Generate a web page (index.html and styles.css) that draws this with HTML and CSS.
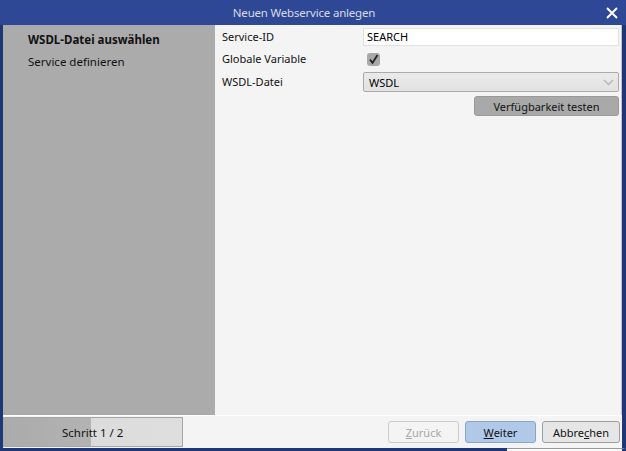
FILE: index.html
```html
<!DOCTYPE html>
<html>
<head>
<meta charset="utf-8">
<link rel="stylesheet" href="styles.css">
</head>
<body>
<div class="window">
  <div class="titlebar">
    <span class="title">Neuen Webservice anlegen</span>
    <svg class="close" width="12" height="12" viewBox="0 0 12 12"><path d="M1 1 L11 11 M11 1 L1 11" stroke="#fff" stroke-width="2" fill="none"/></svg>
  </div>
  <div class="main">
    <div class="sidebar">
      <div class="step active">WSDL-Datei auswählen</div>
      <div class="step">Service definieren</div>
    </div>
    <div class="content">
      <div class="form">
        <label class="lbl">Service-ID</label>
        <div class="input">SEARCH</div>
        <label class="lbl">Globale Variable</label>
        <div class="cbcell"><span class="checkbox"><svg width="11" height="11" viewBox="0 0 11 11"><path d="M2 5.5 L4.5 9 L9.5 1" stroke="#222" stroke-width="1.8" fill="none"/></svg></span></div>
        <label class="lbl">WSDL-Datei</label>
        <div class="select"><span>WSDL</span><svg width="11" height="7" viewBox="0 0 11 7"><path d="M1 1 L5.5 5.5 L10 1" stroke="#b4b4b4" stroke-width="1.3" fill="none"/></svg></div>
        <div class="btnrow"><button class="btn test">Verfügbarkeit testen</button></div>
      </div>
    </div>
  </div>
  <div class="footer">
    <div class="progress"><span>Schritt 1 / 2</span></div>
    <div class="buttons">
      <button class="btn disabled"><u>Z</u>urück</button>
      <button class="btn primary"><u>W</u>eiter</button>
      <button class="btn">Abbre<u>c</u>hen</button>
    </div>
  </div>
  <div class="bottom"><div class="bottom-dark"></div><div class="bottom-light"></div></div>
</div>
</body>
</html>
```
FILE: styles.css
```css
html, body {
  margin: 0;
  padding: 0;
}
body {
  width: 626px;
  height: 451px;
  overflow: hidden;
  font-family: "Noto Sans", "Open Sans", sans-serif;
  font-size: 11px;
  color: #111;
}
.window {
  width: 626px;
  height: 451px;
  display: flex;
  flex-direction: column;
  background: #1f3677;
}
.titlebar {
  height: 25px;
  flex: none;
  background: #2e4896;
  display: flex;
  align-items: center;
  justify-content: center;
  padding-right: 18px;
  position: relative;
}
.title {
  color: #d6dbe8;
  font-size: 11.5px;
  font-family: "Noto Sans", sans-serif;
  letter-spacing: -0.2px;
}
.close {
  position: absolute;
  right: 8px;
  top: 7px;
}
.main {
  flex: none;
  height: 390px;
  display: flex;
  margin: 0 4px 0 3px;
}
.sidebar {
  width: 212px;
  background: #ababab;
  padding-top: 4px;
  box-sizing: border-box;
}
.step {
  padding-left: 25px;
  height: 22px;
  line-height: 22px;
  color: #111;
  font-size: 11.5px;
}
.step.active {
  font-weight: bold;
}
.content {
  flex: 1;
  background: #f4f4f4;
  border-right: 1px solid #c4c4c4;
  padding: 3px 2px 0 7px;
}
.form {
  display: grid;
  grid-template-columns: 141px 1fr;
  grid-auto-rows: auto;
  align-items: center;
}
.lbl {
  line-height: 18px;
}
.input {
  height: 18px;
  box-sizing: border-box;
  background: #fff;
  border: 1px solid #e2e2e2;
  padding-left: 3px;
  line-height: 16px;
  color: #000;
}
.cbcell {
  height: 26px;
  display: flex;
  align-items: center;
  padding-left: 4px;
}
.checkbox {
  width: 13px;
  height: 13px;
  border-radius: 3px;
  background: #a9a9a9;
  display: flex;
  align-items: center;
  justify-content: center;
}
.select {
  height: 20px;
  box-sizing: border-box;
  border: 1px solid #aaaaaa;
  border-radius: 2px;
  background: linear-gradient(#eaeaea, #e2e2e2);
  display: flex;
  align-items: center;
  justify-content: space-between;
  padding: 0 4px 0 5px;
  color: #000;
}
.btnrow {
  grid-column: 2;
  display: flex;
  justify-content: flex-end;
  padding-top: 4px;
}
.btn {
  font-family: inherit;
  font-size: 11px;
  color: #111;
  height: 22px;
  box-sizing: border-box;
  border: 1px solid #9e9e9e;
  border-radius: 3px;
  background: #e6e6e6;
  padding: 0;
  margin: 0;
}
.btn.test {
  width: 145px;
  height: 20px;
  background: #a9a9a9;
  border-color: #9a9a9a;
}
.footer {
  flex: none;
  height: 33px;
  margin: 0 4px 0 3px;
  background: #f4f4f4;
  border-top: 1px solid #ffffff;
  box-sizing: border-box;
  display: flex;
  align-items: center;
  justify-content: space-between;
}
.progress {
  width: 180px;
  height: 30px;
  box-sizing: border-box;
  border: 1px solid #a6a6a6;
  border-left: none;
  background: linear-gradient(90deg, #ababab 0, #b3b3b3 88px, #dcdcdc 88px, #dedede 100%);
  display: flex;
  align-items: center;
  padding-left: 59px;
  font-size: 11.5px;
}
.buttons {
  display: flex;
  gap: 6px;
  padding-right: 2px;
}
.buttons .btn {
  width: 71px;
}
.buttons .btn:last-child {
  width: 78px;
}
.btn.disabled {
  color: #a6a6a6;
  border-color: #cccccc;
  background: #f4f4f4;
}
.btn.primary {
  background: #b1c9e8;
  border-color: #86a5cf;
}
.bottom {
  flex: 1;
  display: flex;
}
.bottom-dark {
  width: 507px;
  background: #1f3677;
}
.bottom-light {
  flex: 1;
  background: #fafafa;
  border-top: 1px solid #9a9a9a;
  border-right: 4px solid #1f3677;
}
```
